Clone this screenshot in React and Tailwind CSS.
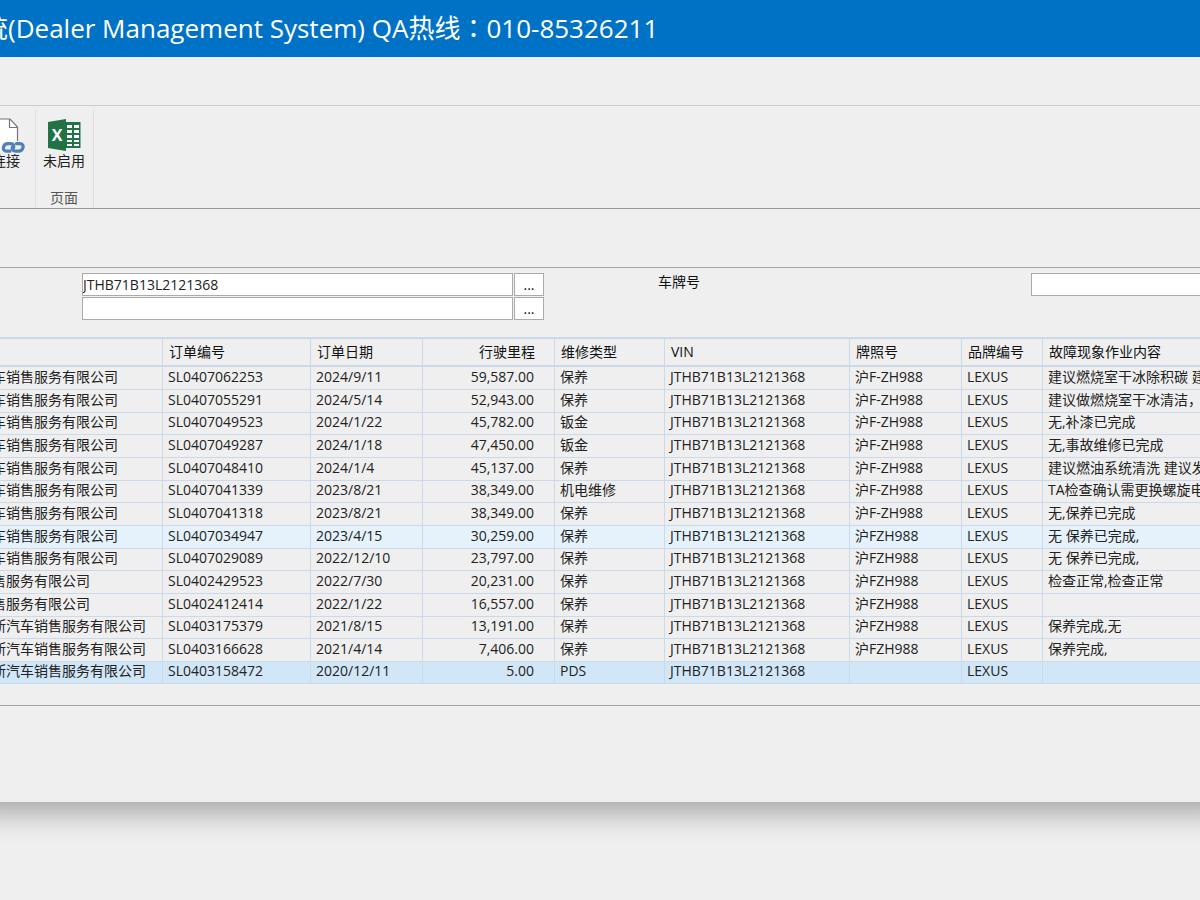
import React from 'react';

const orders = [
  ['车销售服务有限公司', 'SL0407062253', '2024/9/11', '59,587.00', '保养', '沪F-ZH988', '建议燃烧室干冰除积碳 建议'],
  ['车销售服务有限公司', 'SL0407055291', '2024/5/14', '52,943.00', '保养', '沪F-ZH988', '建议做燃烧室干冰清洁，清'],
  ['车销售服务有限公司', 'SL0407049523', '2024/1/22', '45,782.00', '钣金', '沪F-ZH988', '无,补漆已完成'],
  ['车销售服务有限公司', 'SL0407049287', '2024/1/18', '47,450.00', '钣金', '沪F-ZH988', '无,事故维修已完成'],
  ['车销售服务有限公司', 'SL0407048410', '2024/1/4', '45,137.00', '保养', '沪F-ZH988', '建议燃油系统清洗 建议发'],
  ['车销售服务有限公司', 'SL0407041339', '2023/8/21', '38,349.00', '机电维修', '沪F-ZH988', 'TA检查确认需更换螺旋电'],
  ['车销售服务有限公司', 'SL0407041318', '2023/8/21', '38,349.00', '保养', '沪F-ZH988', '无,保养已完成'],
  ['车销售服务有限公司', 'SL0407034947', '2023/4/15', '30,259.00', '保养', '沪FZH988', '无 保养已完成,', 'hover'],
  ['车销售服务有限公司', 'SL0407029089', '2022/12/10', '23,797.00', '保养', '沪FZH988', '无 保养已完成,'],
  ['售服务有限公司', 'SL0402429523', '2022/7/30', '20,231.00', '保养', '沪FZH988', '检查正常,检查正常'],
  ['售服务有限公司', 'SL0402412414', '2022/1/22', '16,557.00', '保养', '沪FZH988', ''],
  ['斯汽车销售服务有限公司', 'SL0403175379', '2021/8/15', '13,191.00', '保养', '沪FZH988', '保养完成,无'],
  ['斯汽车销售服务有限公司', 'SL0403166628', '2021/4/14', '7,406.00', '保养', '沪FZH988', '保养完成,'],
  ['斯汽车销售服务有限公司', 'SL0403158472', '2020/12/11', '5.00', 'PDS', '', '', 'selected'],
];

const rowTone = {
  hover: 'bg-[#e5f2fb]',
  selected: 'bg-[#d1e7f7]',
};

const VIN = 'JTHB71B13L2121368';

function LinkPageIcon() {
  return (
    <svg width="33" height="36" viewBox="0 0 33 36" fill="none" aria-hidden="true">
      <path d="M2 1h16l7.500 8v15H10l-1.500 9H2z" fill="#fff" />
      <path d="M2 1h16l7.500 8v14M17.500 1v8.500h8" stroke="#777" strokeWidth="1.2" />
      <g stroke="#4f81b8" strokeWidth="3.2" strokeLinecap="round" strokeLinejoin="round">
        <path d="M18 33.200h-3.500c-2.500 0-3.500-2-3-4 .500-2.200 2-3.600 4.500-3.600h2.500c3 0 4 2 3 4.400" />
        <path d="M24.500 25.600H28c2.500 0 3.500 2 3 4-.500 2.200-2 3.600-4.500 3.600H24c-3 0-4.500-1.800-3.500-4.200" />
      </g>
    </svg>
  );
}

function ExcelIcon() {
  return (
    <svg width="34" height="34" viewBox="0 0 34 34" aria-hidden="true">
      <path d="M18 4h15.500v26H18z" fill="#217346" />
      <path d="M20 7h5v3h-5zM27 7h5v3h-5zM20 12h5v3h-5zM27 12h5v3h-5zM20 17h5v3h-5zM27 17h5v3h-5zM20 22h5v2h-5zM27 22h5v2h-5zM20 26h5v2h-5zM27 26h5v2h-5z" fill="#fff" />
      <path d="M1 4 19 1v32L1 30z" fill="#217346" />
      <text x="10" y="23" textAnchor="middle" fontSize="16" fontWeight="700" fill="#fff" fontFamily="Open Sans">X</text>
    </svg>
  );
}

function LookupField({ id, label, value }) {
  return (
    <div className="flex gap-px">
      <input
        id={id}
        aria-label={label}
        defaultValue={value}
        className="min-w-0 flex-1 h-[23px] border border-[#ababab] bg-white text-[#222] outline-none"
      />
      <button type="button" className="w-[30px] h-[23px] border border-[#ababab] bg-white text-[#111]">
        ...
      </button>
    </div>
  );
}

export default function App() {
  return (
    <div className="min-h-screen overflow-hidden bg-[#efefef] text-[14px] leading-[20px] text-[#222] font-['Open_Sans','Noto_Sans_CJK_SC',sans-serif]">
      <div className="bg-[#efefef] shadow-[0_-20px_28px_30px_rgba(0,0,0,0.32)]">
        {/* Title bar */}
        <header className="h-[57px] flex items-center overflow-hidden bg-[#0072c6] pb-[2px]">
          <h1 className="-ml-[18px] whitespace-nowrap text-[26px] leading-[36px] text-white">
            统(Dealer Management System) QA热线
            <span className="font-['Noto_Sans_CJK_TC',sans-serif]">：</span>
            010-85326211
          </h1>
        </header>

        <div className="h-12" />

        {/* Ribbon */}
        <div className="h-[104px] flex border-t border-b border-t-[#c9cbd6] border-b-[#999] pt-1">
          <div className="-ml-2 w-11 border-r border-[#e0e0e4] pt-2">
            <button type="button" className="flex flex-col items-start whitespace-nowrap">
              <LinkPageIcon />
              <span className="-mt-[3px]">连接</span>
            </button>
          </div>
          <div className="w-[58px] flex flex-col items-center justify-between border-r border-[#e0e0e4] pt-2 pr-px">
            <button type="button" className="flex flex-col items-center whitespace-nowrap">
              <ExcelIcon />
              <span className="-mt-px">未启用</span>
            </button>
            <span className="text-[#555]">页面</span>
          </div>
        </div>

        <div className="h-[59px] border-b border-[#a5a5a5]" />

        {/* Filters */}
        <form className="grid grid-cols-[462fr_487fr_169fr] h-[69px] pl-[82px] pt-[5px]" onSubmit={(e) => e.preventDefault()}>
          <div className="flex flex-col gap-px">
            <LookupField id="vin" label="VIN" value={VIN} />
            <LookupField id="order" label="订单编号" value="" />
          </div>
          <label htmlFor="plate" className="justify-self-start pl-[114px] leading-[18px] text-[#111]">车牌号</label>
          <input id="plate" className="min-w-0 h-[23px] border border-r-0 border-[#ababab] bg-white outline-none" />
        </form>

        {/* Orders */}
        <div className="overflow-hidden">
          <table className="-ml-[9px] w-[calc(100%+10px)] table-fixed border-collapse whitespace-nowrap text-left leading-[18px] [&_td]:border [&_td]:border-[#ccd9e8] [&_td]:overflow-hidden [&_td]:px-[5px] [&_td]:pt-0 [&_td]:pb-[2px] [&_th]:border [&_th]:border-[#ccd9e8] [&_th]:px-[6px] [&_th]:py-0 [&_th]:font-normal [&_th]:text-[#111]">
            <colgroup>
              <col className="w-[171px]" />
              <col className="w-[148px]" />
              <col className="w-[112px]" />
              <col className="w-[132px]" />
              <col className="w-[110px]" />
              <col className="w-[185px]" />
              <col className="w-[112px]" />
              <col className="w-[81px]" />
              <col />
            </colgroup>
            <thead>
              <tr className="h-[28px] border-t-2 border-b-2 border-[#ccd9e8]">
                <th aria-label="经销商" />
                <th>订单编号</th>
                <th>订单日期</th>
                <th className="pr-[19px]! text-right">行驶里程</th>
                <th>维修类型</th>
                <th>VIN</th>
                <th>牌照号</th>
                <th>品牌编号</th>
                <th>故障现象作业内容</th>
              </tr>
            </thead>
            <tbody>
              {orders.map(([dealer, no, date, mileage, type, plate, note, state]) => (
                <tr key={no} className={`h-[23px] nth-[3n]:h-[22px] last:h-[22px] ${rowTone[state] || ''}`}>
                  <td className="pl-0!">{dealer}</td>
                  <td>{no}</td>
                  <td>{date}</td>
                  <td className="pr-[20px]! text-right">{mileage}</td>
                  <td>{type}</td>
                  <td>{VIN}</td>
                  <td>{plate}</td>
                  <td>LEXUS</td>
                  <td>{note}</td>
                </tr>
              ))}
            </tbody>
          </table>
        </div>

        <div className="h-[22px] border-b border-[#a5a5a5]" />
        <footer className="h-24" />
      </div>
    </div>
  );
}
